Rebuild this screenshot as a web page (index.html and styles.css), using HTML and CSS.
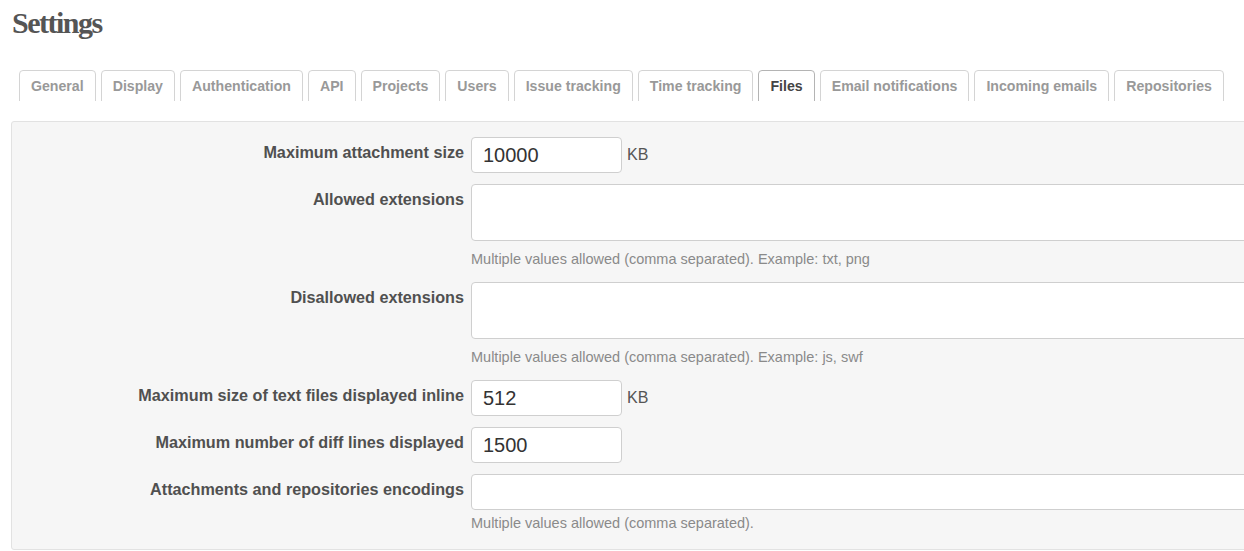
FILE: index.html
```html
<!DOCTYPE html>
<html lang="en">
<head>
<meta charset="utf-8">
<title>Settings</title>
<link rel="stylesheet" href="styles.css">
</head>
<body>
<div class="page">
  <h2 class="title">Settings</h2>
  <ul class="tabs">
    <li class="tab">General</li>
    <li class="tab">Display</li>
    <li class="tab">Authentication</li>
    <li class="tab">API</li>
    <li class="tab">Projects</li>
    <li class="tab">Users</li>
    <li class="tab">Issue tracking</li>
    <li class="tab">Time tracking</li>
    <li class="tab active">Files</li>
    <li class="tab">Email notifications</li>
    <li class="tab">Incoming emails</li>
    <li class="tab">Repositories</li>
  </ul>
  <div class="box">
    <div class="row">
      <label class="label">Maximum attachment size</label>
      <div class="control">
        <div class="field-line"><input class="num" type="text" value="10000"><span class="unit">KB</span></div>
      </div>
    </div>
    <div class="row">
      <label class="label">Allowed extensions</label>
      <div class="control">
        <textarea class="area"></textarea>
        <em class="hint">Multiple values allowed (comma separated). Example: txt, png</em>
      </div>
    </div>
    <div class="row">
      <label class="label">Disallowed extensions</label>
      <div class="control">
        <textarea class="area"></textarea>
        <em class="hint">Multiple values allowed (comma separated). Example: js, swf</em>
      </div>
    </div>
    <div class="row">
      <label class="label">Maximum size of text files displayed inline</label>
      <div class="control">
        <div class="field-line"><input class="num" type="text" value="512"><span class="unit">KB</span></div>
      </div>
    </div>
    <div class="row">
      <label class="label">Maximum number of diff lines displayed</label>
      <div class="control">
        <div class="field-line"><input class="num" type="text" value="1500"></div>
      </div>
    </div>
    <div class="row">
      <label class="label">Attachments and repositories encodings</label>
      <div class="control">
        <input class="wide" type="text" value="">
        <em class="hint short">Multiple values allowed (comma separated).</em>
      </div>
    </div>
  </div>
</div>
</body>
</html>
```
FILE: styles.css
```css
html, body {
  margin: 0;
  padding: 0;
  background: #fff;
  overflow: hidden;
}

body {
  font-family: "Liberation Sans", Arial, sans-serif;
  color: #555;
}

.page {
  padding-left: 12px;
  width: 1400px;
}

.title {
  margin: 5px 0 0;
  font-family: "Liberation Serif", "Times New Roman", serif;
  font-weight: bold;
  font-size: 30px;
  line-height: 36px;
  letter-spacing: -1.5px;
  color: #555;
}

.tabs {
  list-style: none;
  margin: 29px 0 0;
  padding: 0 0 0 7px;
  display: flex;
  gap: 5px;
  height: 31px;
  overflow: hidden;
}

.tab {
  height: 34px;
  padding: 0 11px;
  border: 1px solid #d4d4d4;
  border-radius: 4px 4px 0 0;
  background: #fff;
  font-size: 14.15px;
  font-weight: bold;
  line-height: 30px;
  color: #999;
  white-space: nowrap;
}

.tab.active {
  color: #444;
  border-color: #b4b4b4;
}

.box {
  margin-top: 20px;
  margin-left: -1px;
  background: #f6f6f6;
  border: 1px solid #e2e2e2;
  border-radius: 3px;
  padding: 15px 0 18px;
}

.row {
  display: grid;
  grid-template-columns: 452px 1fr;
  column-gap: 7px;
  margin-bottom: 11px;
}

.row:last-child {
  margin-bottom: 0;
}

.label {
  text-align: right;
  font-weight: bold;
  font-size: 16.2px;
  line-height: 20px;
  padding-top: 5px;
  color: #505050;
  white-space: nowrap;
}

.control {
  display: flex;
  flex-direction: column;
  align-items: flex-start;
}

.field-line {
  display: flex;
  align-items: center;
}

.num, .wide, .area {
  box-sizing: border-box;
  border: 1px solid #cfcfcf;
  border-radius: 4px;
  background: #fff;
  font-family: "Liberation Sans", Arial, sans-serif;
  color: #333;
  margin: 0;
  outline: none;
}

.num {
  width: 151px;
  height: 36px;
  padding: 0 11px;
  font-size: 20px;
}

.wide {
  width: 900px;
  height: 36px;
  padding: 0 11px;
  font-size: 20px;
}

.area {
  display: block;
  width: 900px;
  height: 57px;
  padding: 6px 11px;
  resize: none;
  font-size: 20px;
}

.unit {
  margin-left: 5px;
  font-size: 16px;
  color: #555;
}

.hint {
  display: block;
  font-style: normal;
  font-size: 14.5px;
  line-height: 16px;
  color: #8a8a8a;
  margin: 10px 0 4px;
  white-space: nowrap;
}

.hint.short {
  margin: 5px 0 0;
}
```
